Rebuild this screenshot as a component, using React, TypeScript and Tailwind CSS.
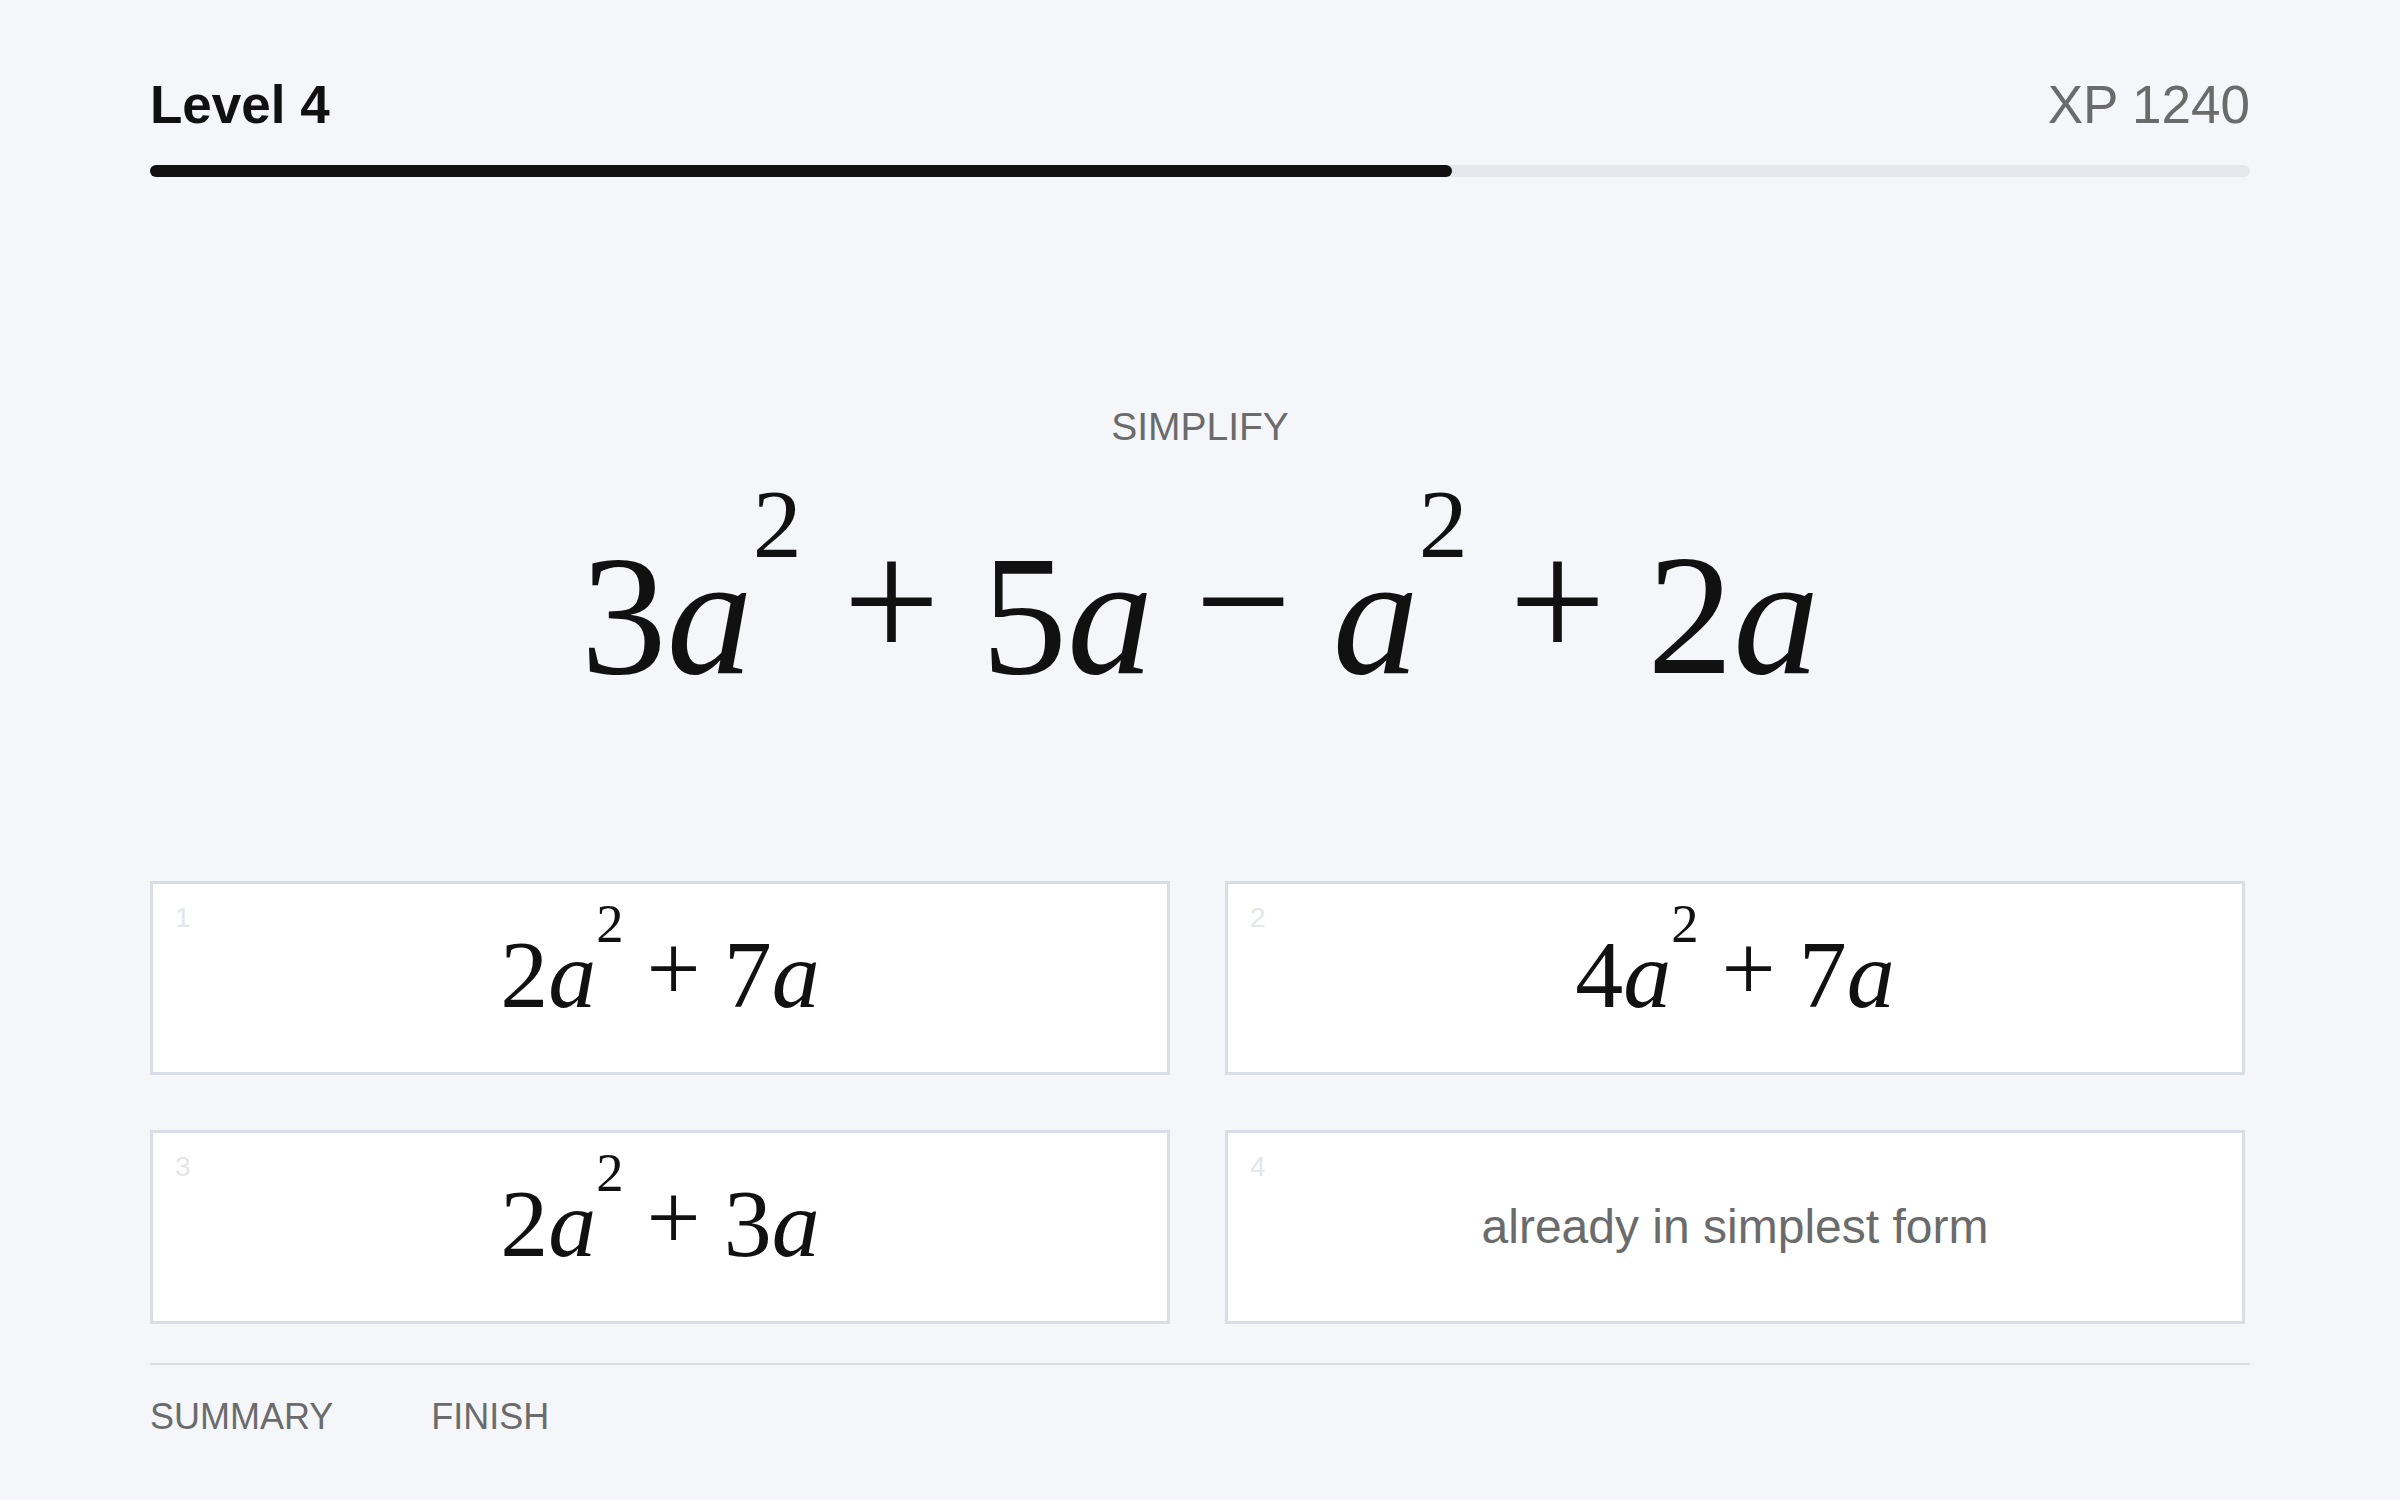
import type { ReactNode } from "react";

// math tokens, set in Times metrics
function V({ children }: { children: ReactNode }) {
  return <i className="italic">{children}</i>;
}

function Sup({ children }: { children: ReactNode }) {
  return <span className="text-[0.57em] align-[1.18em]">{children}</span>;
}

function Op({ children }: { children: ReactNode }) {
  return <span className="mx-[0.24em] align-[0.08em]">{children}</span>;
}

type Term = { coef?: string; v: string; pow?: string };

function Expr({ terms, ops, className }: { terms: Term[]; ops: string[]; className: string }) {
  return (
    <div
      className={`font-['Liberation_Serif','Times_New_Roman',serif] leading-none text-[#111111] whitespace-nowrap ${className}`}
    >
      {terms.map((t, i) => (
        <span key={i}>
          {i > 0 && <Op>{ops[i - 1]}</Op>}
          {t.coef}
          <V>{t.v}</V>
          {t.pow && <Sup>{t.pow}</Sup>}
        </span>
      ))}
    </div>
  );
}

const options = [
  { n: "1", terms: [{ coef: "2", v: "a", pow: "2" }, { coef: "7", v: "a" }], ops: ["+"] },
  { n: "2", terms: [{ coef: "4", v: "a", pow: "2" }, { coef: "7", v: "a" }], ops: ["+"] },
  { n: "3", terms: [{ coef: "2", v: "a", pow: "2" }, { coef: "3", v: "a" }], ops: ["+"] },
  { n: "4", text: "already in simplest form" },
];

export default function App() {
  return (
    <div className="min-h-screen bg-[#f4f6fa] px-[150px] pt-[78px] font-['Liberation_Sans',Arial,sans-serif]">
      {/* header */}
      <div className="flex items-baseline justify-between text-[53px] leading-none">
        <h1 className="font-bold text-[#111111]">Level 4</h1>
        <span className="text-[#6b6b6b]">XP 1240</span>
      </div>
      <div className="mt-[34px] h-3 rounded-full bg-[#e4e7eb]">
        <div className="h-3 w-[62%] rounded-full bg-[#111111]" />
      </div>

      {/* question */}
      <p className="mt-[230px] text-center text-[39px] leading-none text-[#6b6b6b]">SIMPLIFY</p>
      <Expr
        className="mt-[29px] text-center text-[172px]"
        terms={[
          { coef: "3", v: "a", pow: "2" },
          { coef: "5", v: "a" },
          { v: "a", pow: "2" },
          { coef: "2", v: "a" },
        ]}
        ops={["+", "\u2212", "+"]}
      />

      {/* answers */}
      <div className="mt-[180px] grid grid-cols-2 gap-[55px] pr-[5px]">
        {options.map((o) => (
          <button
            key={o.n}
            className="relative flex h-[194px] items-center justify-center border-[3px] border-[#d9dee6] bg-white"
          >
            <span className="absolute left-[22px] top-[20px] text-[28px] leading-none text-[#e3e6eb]">
              {o.n}
            </span>
            {o.terms ? (
              <Expr className="mb-[34px] text-[96px]" terms={o.terms} ops={o.ops} />
            ) : (
              <span className="text-[48px] leading-none text-[#6b6b6b]">{o.text}</span>
            )}
          </button>
        ))}
      </div>

      {/* footer */}
      <div className="mt-[39px] flex gap-[98px] border-t-2 border-[#d8dde4] pt-[34px] text-[36px] leading-none text-[#6b6b6b]">
        <span>SUMMARY</span>
        <span>FINISH</span>
      </div>
    </div>
  );
}
